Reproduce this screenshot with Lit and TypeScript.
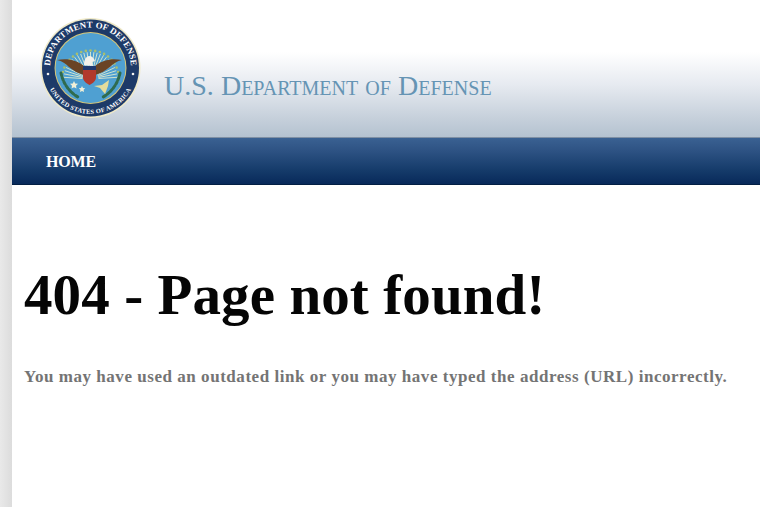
import { LitElement, html, css, svg } from "lit";
import { customElement } from "lit/decorators.js";

@customElement("app-root")
export class AppRoot extends LitElement {
  static styles = css`
    :host {
      display: flex;
      width: 760px;
      height: 507px;
      overflow: hidden;
      background: #fff;
      font-family: "Liberation Serif", "Times New Roman", serif;
    }
    .edge {
      width: 12px;
      flex: none;
      background: linear-gradient(90deg, #e9e9e9, #dcdcdc);
    }
    .page { flex: 1; min-width: 0; display: flex; flex-direction: column; }
    .masthead {
      height: 137px;
      box-sizing: border-box;
      display: flex;
      align-items: flex-start;
      padding: 17px 0 0 28px;
      background: linear-gradient(180deg, #fff 0, #fff 52px, #e6eaf0 85px, #c6d0db 118px, #b4c2d0 137px);
    }
    .seal { width: 102px; height: 102px; flex: none; display: block; }
    .agency {
      margin: 55px 0 0 22px;
      font-size: 28px;
      line-height: 28px;
      font-variant: small-caps;
      font-weight: 400;
      letter-spacing: 0.02px;
      color: #6594b4;
      white-space: nowrap;
    }
    nav {
      height: 48px;
      box-sizing: border-box;
      border-top: 1px solid #7f8fa3;
      border-bottom: 1px solid #031f44;
      padding: 15px 0 0 34px;
      background: linear-gradient(180deg, #3a6192 0, #2f5485 25%, #143a69 72%, #08295a 100%);
    }
    nav a {
      color: #fff;
      font-size: 16px;
      line-height: 17px;
      font-weight: 700;
      text-decoration: none;
      display: block;
      letter-spacing: -0.15px;
    }
    main { padding: 79px 0 0 12px; }
    h1 {
      margin: 0;
      font-size: 57px;
      line-height: 62px;
      font-weight: 700;
      color: #050505;
      letter-spacing: 0.1px;
      white-space: nowrap;
    }
    p {
      margin: 41px 0 0;
      font-size: 17px;
      line-height: 20px;
      font-weight: 700;
      letter-spacing: 0.54px;
      color: #747474;
      white-space: nowrap;
    }
  `;

  private seal() {
    const rays = Array.from({ length: 25 }, (_, i) => {
      const a = (Math.PI * (i + 0.5)) / 25;
      const x = 50.5 - Math.cos(a) * 27;
      const y = 62 - Math.sin(a) * 27;
      const x2 = 50.5 - Math.cos(a) * 8;
      const y2 = 62 - Math.sin(a) * 8;
      return svg`<line x1=${x.toFixed(1)} y1=${y.toFixed(1)} x2=${x2.toFixed(1)} y2=${y2.toFixed(1)} stroke="#cfe3cf" stroke-width="1"/>`;
    });
    const beads = Array.from({ length: 19 }, (_, i) => {
      const a = (Math.PI * (i + 0.5)) / 19;
      const x = 50.5 - Math.cos(a) * 28.5;
      const y = 62 - Math.sin(a) * 28.5;
      return svg`<circle cx=${x.toFixed(1)} cy=${y.toFixed(1)} r="1.3" fill="#a9bf6e"/>`;
    });
    return html`<svg class="seal" viewBox="0 0 102 102" role="img" aria-label="Department of Defense seal">
      <defs>
        <path id="top" d="M 10.6 58 A 40.5 40.5 0 1 1 90.4 58"/>
        <path id="bottom" d="M 6.1 62.9 A 46 46 0 0 0 94.9 62.9"/>
      </defs>
      <circle cx="50.5" cy="51" r="50" fill="#efe9c8"/>
      <circle cx="50.5" cy="51" r="48.5" fill="#1d3a68"/>
      <circle cx="50.5" cy="51" r="36" fill="#d8c777"/>
      <circle cx="50.5" cy="51" r="35" fill="#4fa0d2"/>
      ${rays}${beads}
      <path d="M21 56c2 10 8 19 17 24M80 56c-2 10-8 19-17 24" fill="none" stroke="#2f6b4f" stroke-width="3" stroke-linecap="round" stroke-dasharray="3 1.5"/>
      <path d="M17 43c10-2 20 0 27 6l0 9c-7-2-11-5-15-8-3-3-7-6-12-7z" fill="#6a4425"/>
      <path d="M82 43c-10-2-20 0-27 6l0 9c7-2 11-5 15-8 3-3 7-6 12-7z" fill="#6a4425"/>
      <path d="M44 48c0-4 1-8 5-9 3 0 5 2 6 5l-3 1 1 4z" fill="#f3f1ea"/>
      <path d="M43 49h13v11c0 4-3 6-6.5 8-3.5-2-6.5-4-6.500-8z" fill="#b23a2c"/>
      <rect x="43" y="49" width="13" height="4" fill="#1f3a70"/>
      <path d="M54 69l8-1 7-5-1 6-3 8-5-6z" fill="#e3dc9c"/>
      <path d="M34 64l1.2 2.5 2.8.3-2 2 .5 2.7-2.500-1.300-2.500 1.300.5-2.700-2-2 2.800-.3zM42 69l1 2 2.200.2-1.600 1.500.4 2.200-2-1-2 1 .4-2.200-1.600-1.500 2.200-.2z" fill="#f2f0d8"/>
      <text font-family="Liberation Serif, serif" font-size="8.8" font-weight="700" fill="#fff" letter-spacing=".2">
        <textPath href="#top" startOffset="50%" text-anchor="middle">DEPARTMENT OF DEFENSE</textPath>
      </text>
      <text font-family="Liberation Serif, serif" font-size="6.4" font-weight="700" fill="#fff" letter-spacing=".3">
        <textPath href="#bottom" startOffset="50%" text-anchor="middle">UNITED STATES OF AMERICA</textPath>
      </text>
      <circle cx="8" cy="57" r="1.3" fill="#f4f4f0"/>
      <circle cx="93" cy="57" r="1.3" fill="#f4f4f0"/>
    </svg>`;
  }

  render() {
    return html`
      <div class="edge"></div>
      <div class="page">
        <header class="masthead">
          ${this.seal()}
          <div class="agency">U.S. Department of Defense</div>
        </header>
        <nav><a href="#">HOME</a></nav>
        <main>
          <h1>404 - Page not found!</h1>
          <p>You may have used an outdated link or you may have typed the address (URL) incorrectly.</p>
        </main>
      </div>
    `;
  }
}
